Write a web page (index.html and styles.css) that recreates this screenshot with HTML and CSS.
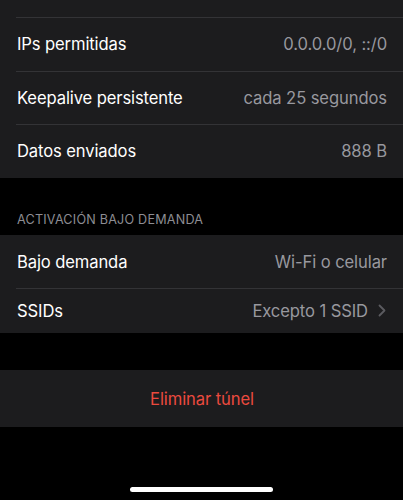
FILE: index.html
```html
<!DOCTYPE html>
<html lang="es">
<head>
<meta charset="utf-8">
<title>Túnel</title>
<link rel="stylesheet" href="styles.css">
</head>
<body>
<div class="screen">
  <div class="group">
    <div class="row row-top"></div>
    <div class="row row-tall sep">
      <span class="label">IPs permitidas</span>
      <span class="value">0.0.0.0/0, ::/0</span>
    </div>
    <div class="row row-mid sep">
      <span class="label">Keepalive persistente</span>
      <span class="value">cada 25 segundos</span>
    </div>
    <div class="row row-tall sep">
      <span class="label">Datos enviados</span>
      <span class="value">888 B</span>
    </div>
  </div>

  <div class="section-header">ACTIVACIÓN BAJO DEMANDA</div>
  <div class="group">
    <div class="row row-mid">
      <span class="label">Bajo demanda</span>
      <span class="value">Wi-Fi o celular</span>
    </div>
    <div class="row row-short sep">
      <span class="label">SSIDs</span>
      <span class="value with-chevron">Excepto 1 SSID
        <svg class="chevron" width="8" height="13" viewBox="0 0 8 13"><path d="M1.5 1.5 L6.5 6.5 L1.5 11.5" fill="none" stroke="#5b5b60" stroke-width="1.8" stroke-linecap="round" stroke-linejoin="round"/></svg>
      </span>
    </div>
  </div>

  <div class="group danger-group">
    <div class="row row-button">
      <span class="danger">Eliminar túnel</span>
    </div>
  </div>

  <div class="home-area">
    <div class="home-indicator"></div>
  </div>
</div>
</body>
</html>
```

FILE: styles.css
```css
html, body {
  margin: 0;
  padding: 0;
  background: #000;
}

body {
  font-family: Inter, "Noto Sans", "Liberation Sans", sans-serif;
  color: #fff;
  -webkit-font-smoothing: antialiased;
}

.screen {
  width: 403px;
  height: 500px;
  overflow: hidden;
  background: #000;
  display: flex;
  flex-direction: column;
}

.group {
  background: #1c1c1e;
  display: flex;
  flex-direction: column;
}

.row {
  position: relative;
  display: flex;
  align-items: center;
  justify-content: space-between;
  padding: 0 16px 0 17px;
  box-sizing: border-box;
}

.row.sep::before {
  content: "";
  position: absolute;
  left: 16px;
  right: 0;
  top: 0;
  height: 1px;
  background: #333336;
}

.row-top { height: 17px; }
.row-tall { height: 54px; }
.row-mid { height: 53px; }
.row-short { height: 45px; }
.row-button { height: 57px; justify-content: center; }

.label {
  font-size: 16.6px;
  letter-spacing: -0.12px;
  color: #fff;
}

.value {
  font-size: 16.6px;
  letter-spacing: -0.1px;
  color: #98989e;
}

.with-chevron {
  display: flex;
  align-items: center;
  gap: 10px;
}

.chevron {
  display: block;
  margin-right: 1px;
}

.section-header {
  padding: 34px 17px 7px;
  height: 16px;
  line-height: 16px;
  font-size: 12.6px;
  letter-spacing: 0.22px;
  color: #8d8d93;
}

.danger-group {
  margin-top: 37px;
}

.danger {
  font-size: 16.6px;
  letter-spacing: -0.1px;
  color: #eb4a3e;
}

.home-area {
  flex: 1;
  display: flex;
  justify-content: center;
  align-items: flex-end;
  padding-bottom: 8px;
}

.home-indicator {
  width: 143px;
  height: 5px;
  border-radius: 3px;
  background: #fff;
}
```
